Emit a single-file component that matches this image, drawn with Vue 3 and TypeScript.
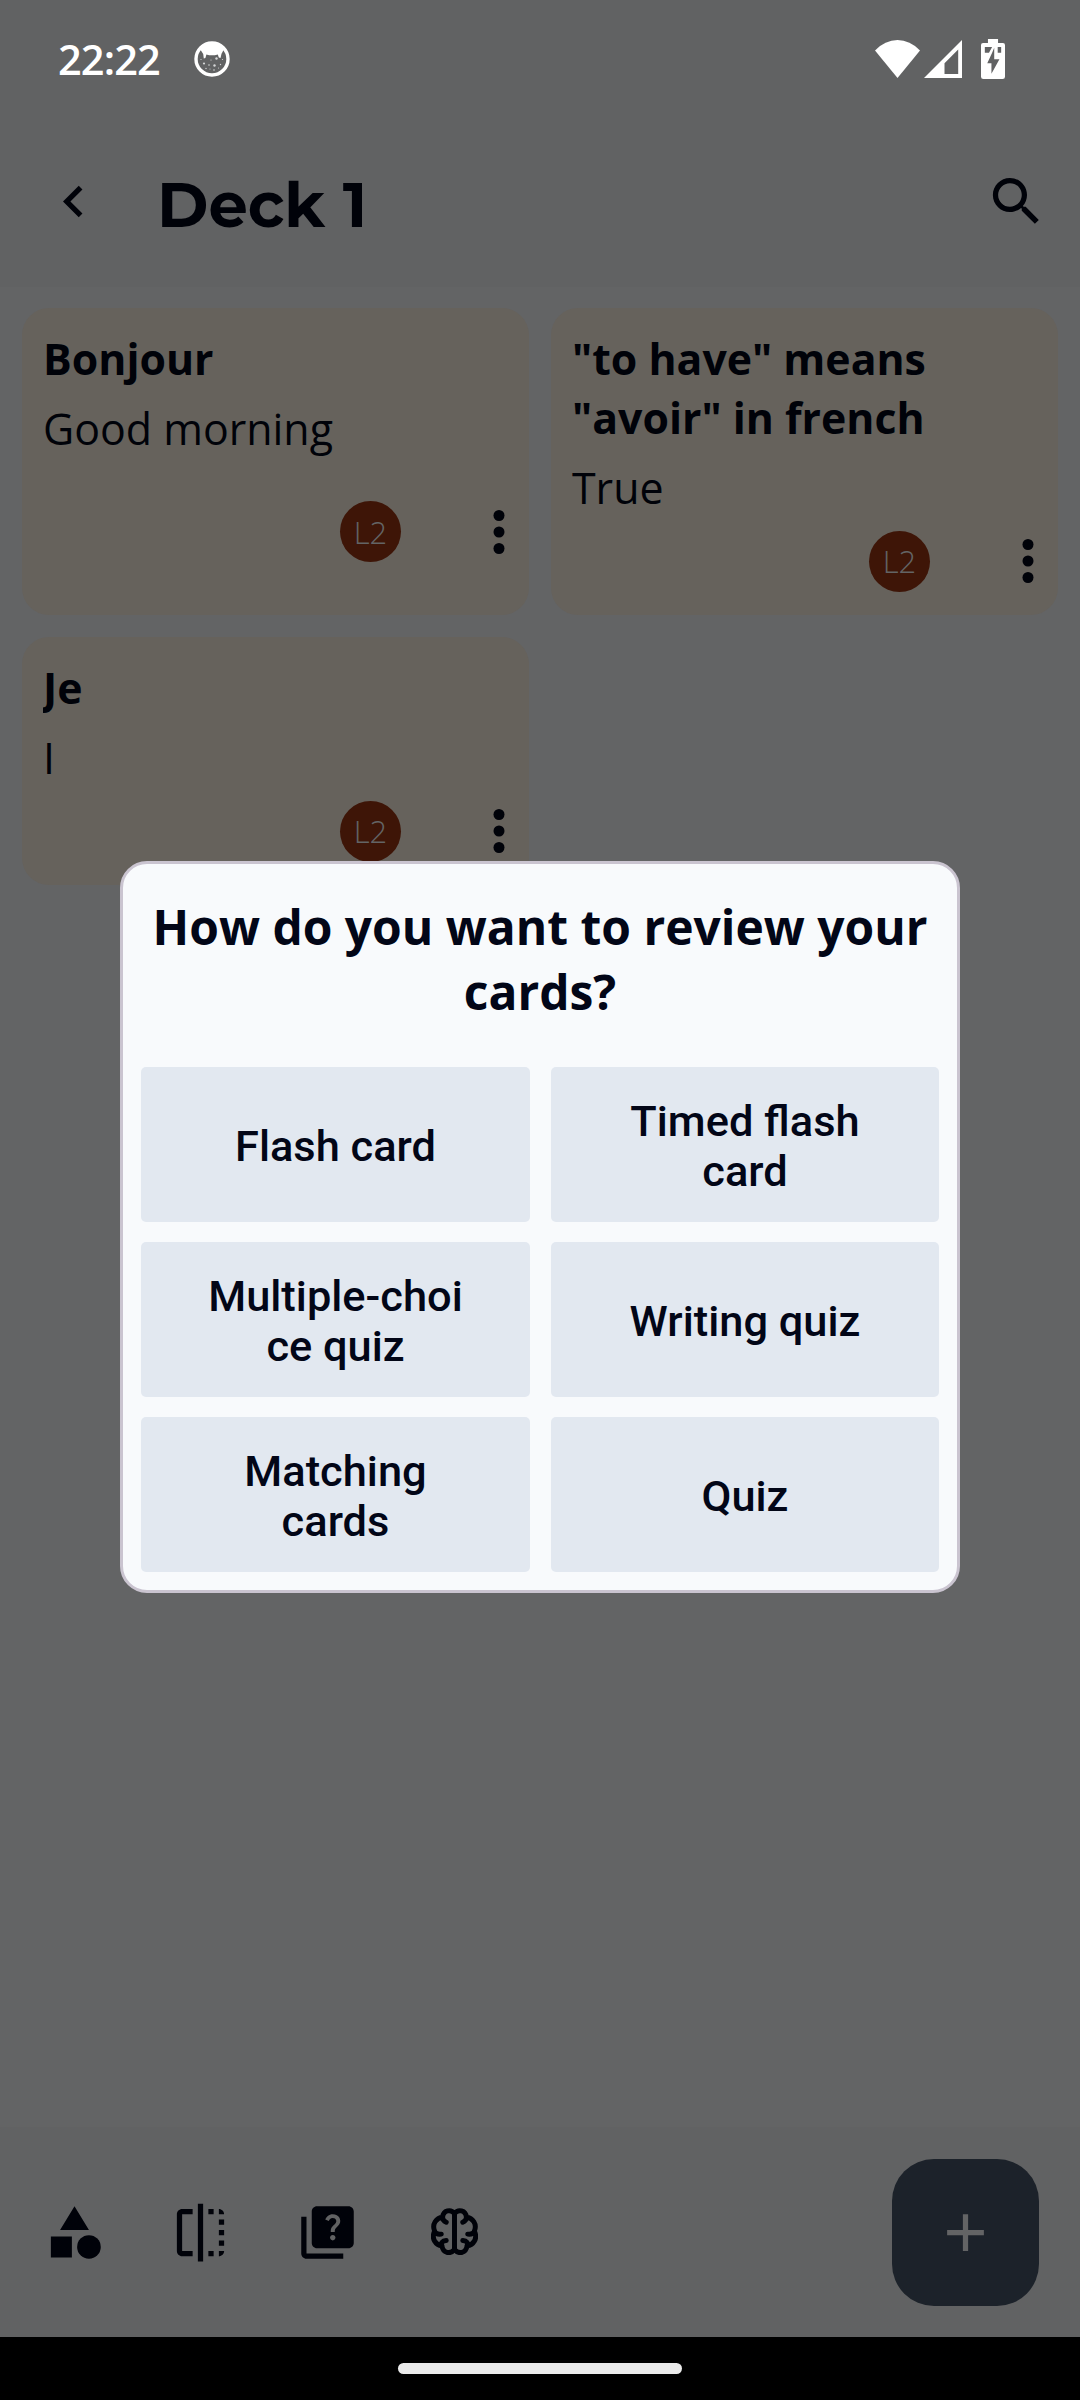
<script setup lang="ts">
interface Card {
  front: string
  back: string
  level: string
}

const cards: Card[] = [
  { front: 'Bonjour', back: 'Good morning', level: 'L2' },
  { front: '"to have" means "avoir" in french', back: 'True', level: 'L2' },
  { front: 'Je', back: 'I', level: 'L2' },
]

const reviewModes: string[][] = [
  ['Flash card'],
  ['Timed flash', 'card'],
  ['Multiple-choi', 'ce quiz'],
  ['Writing quiz'],
  ['Matching', 'cards'],
  ['Quiz'],
]
</script>

<template>
  <div class="screen">
    <div class="status">
      <span class="time">22:22</span>
      <svg class="notif" viewBox="0 0 36 36">
        <circle cx="18" cy="18" r="16" fill="none" stroke="#fff" stroke-width="3.4" />
        <path d="M6 8Q18-3 30 8L28.500 11Q27.300 12.500 27 15L26.500 17 24.800 16.500 23.800 13.500Q18 15.200 12.400 13.500L11.400 17 9.800 17.500 9.200 13Z" fill="#fff" />
        <g fill="#d4d5d6">
          <circle cx="10" cy="22.500" r="1.100" /><circle cx="15" cy="24" r="0.800" /><circle cx="20.500" cy="24.500" r="1.200" />
          <circle cx="22.500" cy="17.500" r="1.200" /><circle cx="17" cy="19" r="0.600" /><circle cx="26.500" cy="23.500" r="0.700" />
          <circle cx="12" cy="27.500" r="0.700" /><circle cx="20" cy="29" r="0.800" /><circle cx="16" cy="28" r="0.500" />
          <circle cx="24.500" cy="27" r="0.500" /><circle cx="28.500" cy="18.500" r="0.600" /><circle cx="7" cy="18.500" r="0.600" />
        </g>
      </svg>
      <div class="system">
        <svg class="wifi" viewBox="0 0 45 38"><path d="M0 10.500Q10 0 22.500 0T45 10.500L22.500 38Z" fill="#fff" /></svg>
        <svg class="signal" viewBox="0 0 38 38"><path fill-rule="evenodd" d="M38 0V38H0ZM34.200 9.500L20.500 23.200V34H34.200Z" fill="#fff" /></svg>
        <svg class="battery" viewBox="0 0 69 120" preserveAspectRatio="none">
          <path d="M20 0H49V12H63Q69 12 69 18V113Q69 120 62 120H7Q0 120 0 113V18Q0 12 6 12H20Z" fill="#fff" />
          <path d="M11 24H32L23 41H11ZM48 24H58V41H48ZM38 26V61H53L30 104V73H18L32 41Z" fill="#616263" />
        </svg>
      </div>
    </div>

    <header class="topbar">
      <svg class="icon" viewBox="0 0 24 24"><path d="M15.410 7.410L14 6l-6 6 6 6 1.410-1.410L10.830 12z" /></svg>
      <h1>Deck 1</h1>
      <svg class="icon" viewBox="0 0 24 24"><path d="M15.500 14h-.79l-.28-.27C15.410 12.590 16 11.110 16 9.500 16 5.910 13.090 3 9.500 3S3 5.910 3 9.500 5.910 16 9.500 16c1.610 0 3.090-.59 4.230-1.570l.27.28v.79l5 4.990L20.490 19l-4.990-5zm-6 0C7.010 14 5 11.990 5 9.500S7.010 5 9.500 5 14 7.010 14 9.500 11.990 14 9.500 14z" /></svg>
    </header>

    <main class="deck">
      <article v-for="card in cards" :key="card.front" class="card">
        <h2>{{ card.front }}</h2>
        <p>{{ card.back }}</p>
        <div class="foot">
          <span class="level">{{ card.level }}</span>
          <svg class="more" viewBox="0 0 24 24"><circle cx="12" cy="6" r="2" /><circle cx="12" cy="12" r="2" /><circle cx="12" cy="18" r="2" /></svg>
        </div>
      </article>
    </main>

    <nav class="bottombar">
      <span class="slot"><svg class="icon" viewBox="0 0 24 24"><path d="M12 2l-5.500 9h11zM3 13.500h8v8H3z" /><circle cx="17.500" cy="17.500" r="4.500" /></svg></span>
      <span class="slot"><svg class="icon" viewBox="0 0 24 24"><path d="M15 21h2v-2h-2v2zm4-12h2V7h-2v2zM3 5v14c0 1.100.9 2 2 2h4v-2H5V5h4V3H5c-1.100 0-2 .9-2 2zm16-2v2h2c0-1.100-.9-2-2-2zm-8 20h2V1h-2v22zm8-6h2v-2h-2v2zM15 5h2V3h-2v2zm4 8h2v-2h-2v2zm0 8c1.100 0 2-.9 2-2h-2v2z" /></svg></span>
      <span class="slot wide"><svg class="icon" viewBox="0 0 24 24"><path d="M4 6H2v14c0 1.100.9 2 2 2h14v-2H4V6z" /><path d="M20 2H8c-1.100 0-2 .9-2 2v12c0 1.100.9 2 2 2h12c1.100 0 2-.9 2-2V4c0-1.100-.9-2-2-2zm-5.990 13c-.59 0-1.050-.47-1.050-1.050 0-.59.47-1.040 1.050-1.040.59 0 1.040.45 1.040 1.040-.01.58-.45 1.050-1.040 1.050zm2.500-6.170c-.63.93-1.230 1.210-1.560 1.810-.13.24-.18.4-.18 1.180h-1.520c0-.41-.06-1.080.26-1.650.41-.73 1.180-1.160 1.630-1.800.48-.68.21-1.940-1.140-1.940-.88 0-1.320.67-1.500 1.230l-1.370-.57C11.510 5.960 12.520 5 13.990 5c1.230 0 2.080.56 2.510 1.260.37.6.58 1.730.01 2.570z" /></svg></span>
      <span class="slot">
        <svg class="brain" viewBox="0 0 142 142">
          <g fill="none" stroke="#000209" stroke-width="15" stroke-linecap="round" stroke-linejoin="round">
            <path d="M71 16V126" />
            <path d="M71 16C60 3 37 6 35 28C16 30 2 48 11 70C0 92 14 112 33 114C36 136 58 141 71 126M35 28C35 37 39 40 46 43M11 72C15 79 22 80 31 79M33 114C29 106 34 99 46 98" />
            <path d="M71 16C82 3 105 6 107 28C126 30 140 48 131 70C142 92 128 112 109 114C106 136 84 141 71 126M107 28C107 37 103 40 96 43M131 72C127 79 120 80 111 79M109 114C113 106 108 99 96 98" />
          </g>
        </svg>
      </span>
      <span class="fab"><svg class="icon light" viewBox="0 0 24 24"><path d="M19 13h-6v6h-2v-6H5v-2h6V5h2v6h6v2z" /></svg></span>
    </nav>

    <div class="gesture"><i></i></div>

    <section class="dialog">
      <h3>How do you want to review your cards?</h3>
      <div class="modes">
        <button v-for="(mode, i) in reviewModes" :key="i" type="button">
          <span v-for="line in mode" :key="line">{{ line }}</span>
        </button>
      </div>
    </section>
  </div>
</template>

<style>
body {
  margin: 0;
}
</style>

<style scoped>
* {
  box-sizing: border-box;
}
h1,
h2,
h3,
p {
  margin: 0;
}
svg {
  display: block;
  flex: none;
}
.screen {
  position: relative;
  display: flex;
  flex-direction: column;
  width: 1080px;
  height: 2400px;
  overflow: hidden;
  background: #636465;
  color: #000209;
  font-family: 'Open Sans', sans-serif;
}
.status {
  display: flex;
  align-items: center;
  height: 118px;
  padding: 0 75px 0 58px;
  background: #616263;
}
.time {
  width: 134px;
  padding-bottom: 1px;
  color: #fff;
  font-size: 41.500px;
  font-weight: 600;
  letter-spacing: -0.9px;
  line-height: 50px;
  white-space: nowrap;
}
.notif {
  width: 36px;
  height: 36px;
  margin-left: 2px;
}
.system {
  display: flex;
  align-items: center;
  margin-left: auto;
}
.wifi {
  width: 45px;
  height: 38px;
}
.signal {
  width: 38px;
  height: 38px;
  margin-left: 4px;
}
.battery {
  width: 24px;
  height: 40px;
  margin-left: 19px;
}
.topbar {
  display: flex;
  align-items: center;
  height: 169px;
  padding: 0 32px 2px 42px;
  background: #616263;
}
.icon {
  width: 63px;
  height: 63px;
  fill: #000209;
}
.topbar h1 {
  flex: 1;
  margin-left: 52px;
  padding-top: 6px;
  font-family: Montserrat, Inter, sans-serif;
  font-size: 62.300px;
  font-weight: 700;
  line-height: 74px;
}
.deck {
  flex: 1;
  display: grid;
  grid-template-columns: 507px 507px;
  gap: 22px;
  align-content: start;
  padding: 21px 22px;
}
.card {
  display: flex;
  flex-direction: column;
  min-height: 248px;
  padding: 21px 0 12px 21px;
  border-radius: 27px;
  background: #66625c;
}
.card h2 {
  width: 400px;
  overflow: hidden;
  font-size: 42.800px;
  font-weight: 700;
  line-height: 59px;
}
.card p {
  margin-top: 11px;
  font-size: 42.900px;
  font-weight: 400;
  line-height: 59px;
}
.foot {
  flex: 1;
  display: flex;
  align-items: center;
  min-height: 86px;
  padding: 2px 0 0 297px;
}
.level {
  display: flex;
  flex: none;
  align-items: center;
  justify-content: center;
  width: 61px;
  height: 61px;
  border-radius: 50%;
  background: #3e1507;
  color: #636465;
  font-size: 31px;
  font-weight: 300;
}
.more {
  width: 66px;
  height: 66px;
  margin-left: 65px;
  fill: #000209;
}
.bottombar {
  display: flex;
  align-items: center;
  height: 210px;
  padding: 0 41px 0 11px;
  background: #616263;
}
.slot {
  display: flex;
  align-items: center;
  justify-content: center;
  width: 126px;
  height: 126px;
}
.wide {
  padding-left: 2px;
}
.brain {
  width: 47px;
  height: 47px;
  margin-left: 4px;
  margin-bottom: 2px;
}
.fab {
  display: flex;
  align-items: center;
  justify-content: center;
  width: 147px;
  height: 147px;
  margin-left: auto;
  border-radius: 42px;
  background: #1c222a;
}
.light {
  fill: #636465;
}
.gesture {
  display: flex;
  justify-content: center;
  height: 63px;
  padding-top: 26px;
  background: #000;
}
.gesture i {
  width: 284px;
  height: 11px;
  border-radius: 6px;
  background: #ebebeb;
}
.dialog {
  position: absolute;
  top: 861px;
  left: 120px;
  width: 840px;
  height: 732px;
  padding: 30px 18px 18px;
  border: 3px solid #cac4d0;
  border-radius: 27px;
  background: #f8fafc;
  color: #020617;
}
.dialog h3 {
  height: 173px;
  font-size: 47.950px;
  font-weight: 700;
  line-height: 65px;
  text-align: center;
}
.modes {
  display: grid;
  grid-template-columns: 389px 388px;
  grid-auto-rows: 155px;
  gap: 20px 21px;
}
.modes button {
  display: flex;
  flex-direction: column;
  align-items: center;
  justify-content: center;
  padding: 4px 0 0;
  border: 0;
  border-radius: 5px;
  background: #e2e8f0;
  color: #020617;
  font-family: Roboto, sans-serif;
  font-size: 43.400px;
  font-weight: 500;
  line-height: 50px;
}
</style>
